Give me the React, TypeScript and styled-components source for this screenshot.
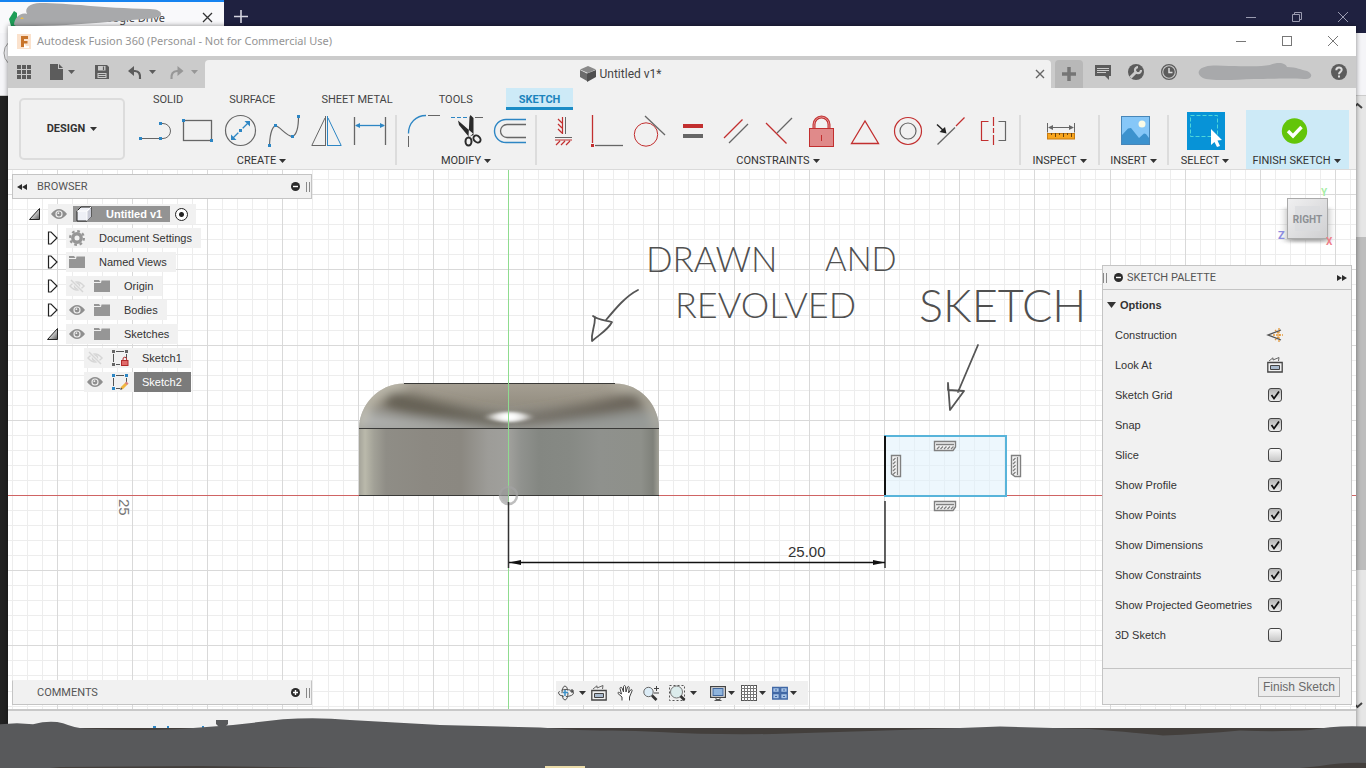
import React, { useState } from "react";
import styled, { createGlobalStyle } from "styled-components";

const UI = `"Liberation Sans", Arial, sans-serif`;
const CAPS = `Roboto, "Liberation Sans", sans-serif`;
const TITLE = `"Noto Sans", "Open Sans", sans-serif`;

const GREY = "#666666";
const BLUE = "#2d86c4";
const RED = "#c22f2f";
const PANEL = "#f1f1f1";

const Global = createGlobalStyle`
  * { box-sizing: border-box; }
  body { margin: 0; font-family: ${UI}; font-size: 11px; color: #333; }
  button { border: 0; background: none; padding: 0; margin: 0; font: inherit; color: inherit; }
  ul { list-style: none; margin: 0; padding: 0; }
  svg { display: block; flex: none; overflow: visible; }
`;

/* ---------- desktop ---------- */

const Desktop = styled.div`
  position: relative;
  display: flex;
  flex-direction: column;
  min-height: 100vh;
  overflow: hidden;
  background: #222;
`;

const BackWindow = styled.div`
  position: absolute;
  inset: 0;
  display: flex;
  flex-direction: column;
`;

const BackTabs = styled.div`
  display: flex;
  height: 33px;
  background: #1f2140;
`;

const BackTab = styled.div`
  position: relative;
  display: flex;
  align-items: center;
  justify-content: flex-end;
  width: 224px;
  padding-right: 12px;
  gap: 38px;
  background: #f9f9fb;
  border-top: 2px solid #1683f0;
  font: 11px/16px ${TITLE};
  color: #444;
`;

const BackControls = styled.div`
  display: flex;
  align-items: center;
  flex: 1;
  justify-content: space-between;
  padding: 0 18px 0 10px;
`;

const ControlSet = styled.div<{ $gap: number }>`
  display: flex;
  align-items: center;
  height: 12px;
  gap: ${(p) => p.$gap}px;
`;

const BackToolbar = styled.div`
  height: 63px;
  background: #f5f5f8;
  border-bottom: 1px solid #ccc;
`;

const BackPage = styled.div`
  display: flex;
  justify-content: flex-end;
  flex: 1;
  background: #222;
`;

const BackScroll = styled.div`
  display: flex;
  flex-direction: column;
  align-items: flex-end;
  justify-content: space-between;
  width: 16px;
  padding: 7px 4px 60px 0;
  background: linear-gradient(#e6e6e6 141px, #bdbdbd 141px 474px, #e6e6e6 474px);
`;

const Scribble = styled.svg`
  position: absolute;
  left: 0;
  top: -2px;
`;

const Window = styled.main`
  position: relative;
  display: flex;
  flex-direction: column;
  flex: 1;
  margin: 26px 10px 0 8px;
  background: ${PANEL};
  box-shadow: 0 0 5px rgba(0, 0, 0, 0.45);
`;

const TitleBar = styled.header`
  display: flex;
  align-items: center;
  height: 30px;
  padding: 0 18px 0 9px;
  gap: 6px;
  background: #fff;
  font: 11px/16px ${TITLE};
  color: #949494;
`;

const Grow = styled.div`
  flex: 1;
`;

/* ---------- document tab strip ---------- */

const TabStrip = styled.div`
  display: flex;
  height: 32px;
  padding-right: 9px;
  background: #cbcbcb;
`;

const QuickTools = styled.div`
  display: flex;
  align-items: center;
  width: 197px;
  padding-left: 9px;
`;

const IconButton = styled.button<{ $ml?: number }>`
  display: flex;
  align-items: center;
  margin-left: ${(p) => p.$ml ?? 0}px;
  gap: 5px;
`;

const DocTab = styled.div`
  display: flex;
  flex: 1;
  align-items: center;
  justify-content: center;
  gap: 4px;
  margin-top: 4px;
  padding: 0 7px 0 4px;
  border-radius: 4px 4px 0 0;
  background: ${PANEL};
  font: 12px/16px ${CAPS};
  color: #444;
`;

const NewTab = styled.button`
  display: flex;
  align-items: center;
  justify-content: center;
  width: 28px;
  margin: 4px 12px 0 4px;
  border-radius: 4px 4px 0 0;
  background: #b8b8b8;
`;

const StripRight = styled.div`
  display: flex;
  align-items: center;
  gap: 17px;
`;

/* ---------- ribbon ---------- */

const Ribbon = styled.div`
  display: flex;
  border-bottom: 1px solid #dadada;
  font: 11px/14px ${CAPS};
  color: #333;
`;

const DesignButton = styled.button`
  display: flex;
  align-items: center;
  justify-content: center;
  gap: 5px;
  width: 106px;
  height: 62px;
  margin: 10px 3px 0 11px;
  border: 2px solid #dcdcdc;
  border-radius: 5px;
  font-weight: 700;
`;

const RibbonMain = styled.div`
  flex: 1;
`;

const RibbonTabs = styled.nav`
  display: flex;
  gap: 20px;
  height: 22px;
  padding-left: 12px;
`;

const RibbonTab = styled.button<{ $active?: boolean }>`
  padding: 4px 13px 0;
  border-bottom: 3px solid ${(p) => (p.$active ? "#1b8cc6" : "transparent")};
  background: ${(p) => (p.$active ? "#cdeaf7" : "none")};
  color: ${(p) => (p.$active ? "#1b84bd" : "#444")};
  font-weight: ${(p) => (p.$active ? 700 : 400)};
`;

const Groups = styled.div`
  display: flex;
  padding-right: 7px;
`;

const GroupBox = styled.section<{ $width?: number; $hot?: boolean }>`
  position: relative;
  display: flex;
  flex-direction: column;
  align-items: center;
  width: ${(p) => (p.$width ? p.$width + "px" : "auto")};
  padding: ${(p) => (p.$width ? "2px 0 0" : "2px 11px 0 11px")};
  background: ${(p) => (p.$hot ? "#cdeaf7" : "none")};
  margin-left: ${(p) => (p.$hot ? "auto" : 0)};
`;

const Divider = styled.div`
  width: 2px;
  height: 50px;
  margin: 5px 0 0 -2px;
  background: #dcdcdc;
`;

const GroupIcons = styled.div`
  display: flex;
  align-items: center;
  height: 38px;
  gap: 11px;
`;

const GroupLabel = styled.button`
  display: flex;
  align-items: center;
  gap: 3px;
  height: 19px;
  padding: 2px 2px 0 0;
  white-space: nowrap;
`;

/* ---------- canvas ---------- */

const Canvas = styled.div`
  position: relative;
  flex: 1;
  min-height: 539px;
  overflow: hidden;
  background: #fff;
`;

const Drawing = styled.svg`
  position: absolute;
  inset: 0;
  width: 100%;
  height: 100%;
`;

const BrowserDock = styled.aside`
  position: absolute;
  left: 4px;
  top: 4px;
  width: 300px;
`;

const Bar = styled.div<{ $open?: boolean }>`
  display: flex;
  align-items: center;
  height: 25px;
  padding: 0 1px 0 ${(p) => (p.$open ? 24 : 4)}px;
  border: 1px solid #c4c4c4;
  ${(p) => p.$open && "border-top-color: #f1f1f1;"}
  background: ${PANEL};
  font: 11px/14px ${CAPS};
  color: #555;
`;

const BarText = styled.h2<{ $left?: number }>`
  flex: 1;
  margin: 0 0 0 ${(p) => p.$left ?? 0}px;
  font: inherit;
`;

const Grip = styled.span`
  width: 4px;
  height: 10px;
  margin-left: 6px;
  border: solid #888;
  border-width: 0 1px;
`;

const Tree = styled.ul`
  padding: 3px 0 0 18px;
`;

const TreeRow = styled.li<{ $level: number }>`
  display: flex;
  align-items: center;
  height: 24px;
  padding-left: ${(p) => p.$level * 18}px;
`;

const Twisty = styled.button`
  width: 18px;
  height: 20px;
  display: flex;
  align-items: center;
`;

const TreeBody = styled.div`
  display: flex;
  align-items: center;
  height: 20px;
  padding-left: 3px;
  background: ${PANEL};
`;

const TreeIcons = styled.div`
  display: flex;
  gap: 9px;
`;

const TreeLabel = styled.span<{ $selected?: boolean }>`
  margin-left: 6px;
  padding: 0 9px 0 8px;
  line-height: 20px;
  color: ${(p) => (p.$selected ? "#fff" : "#333")};
  background: ${(p) => (p.$selected ? "#7b7b7b" : "none")};
`;

const RootChip = styled.span`
  display: flex;
  align-items: center;
  gap: 14px;
  height: 16px;
  margin: 0 5px 0 6px;
  padding: 0 8px 0 3px;
  background: #939393;
  color: #fff;
  font-weight: 700;
`;

const RootRadio = styled.input`
  appearance: none;
  width: 13px;
  height: 13px;
  margin: 0 8px 0 0;
  border: 1px solid #222;
  border-radius: 50%;
  background: radial-gradient(circle, #222 0 2px, #fff 3px);
`;

const CommentsDock = styled.aside`
  position: absolute;
  left: 4px;
  bottom: 4px;
  width: 300px;
`;

const NavDock = styled.div`
  position: absolute;
  left: 0;
  right: 0;
  bottom: 4px;
  display: flex;
  justify-content: center;
  pointer-events: none;
`;

const NavBar = styled.div`
  display: flex;
  align-items: center;
  width: 252px;
  height: 24px;
  padding-left: 2px;
  background: #f0f0f0;
`;

const NavButton = styled.button<{ $gap: number }>`
  display: flex;
  align-items: center;
  gap: 2px;
  margin-right: ${(p) => p.$gap}px;
`;

const ViewCube = styled.div`
  position: absolute;
  right: 22px;
  top: 14px;
`;

const Palette = styled.aside`
  position: absolute;
  right: 4px;
  top: 95px;
  width: 250px;
  border: 1px solid #c4c4c4;
  background: ${PANEL};
`;

const PaletteHead = styled.div`
  display: flex;
  align-items: center;
  height: 24px;
  padding: 0 4px 0 0;
  border-bottom: 1px solid #c4c4c4;
  font: 11px/14px ${CAPS};
  color: #555;
`;

const HeadGrip = styled(Grip)`
  margin: 0 7px 0 0;
`;

const PaletteTitle = styled.h3`
  display: flex;
  align-items: center;
  gap: 4px;
  height: 30px;
  margin: 0;
  padding-left: 4px;
  font: 700 11px/14px ${UI};
`;

const Option = styled.div`
  display: flex;
  align-items: center;
  height: 30px;
  padding-left: 12px;
`;

const OptionLabel = styled.label`
  width: 152px;
`;

const CheckWrap = styled.span`
  display: grid;
  width: 16px;
  place-items: center;

  > * { grid-area: 1 / 1; }
  > svg { pointer-events: none; }
`;

const Check = styled.input`
  appearance: none;
  width: 14px;
  height: 14px;
  margin: 0;
  border: 1px solid #444;
  border-radius: 3px;
  background: linear-gradient(#fafafa, #c6c6c6);

  &:checked { background: linear-gradient(#b4b4b4, #ececec); }
`;

const PaletteFoot = styled.div`
  display: flex;
  justify-content: flex-end;
  margin-top: 18px;
  padding: 8px 11px 7px;
  border-top: 1px solid #c4c4c4;
`;

const FinishButton = styled.button`
  height: 20px;
  padding: 0 4px;
  border: 1px solid #b4b4b4;
  background: #ececec;
  color: #6a6a6a;
  font: 12px/16px ${UI};
`;

const StatusBar = styled.footer`
  height: 59px;
  border-top: 2px solid #c8c8c8;
  background: #f0f0f0;
`;

const Redaction = styled.svg`
  position: absolute;
  left: 0;
  bottom: 0;
  width: 100%;
  height: 56px;
`;

/* ---------- small drawings ---------- */

type IconProps = { w?: number; h?: number; children: React.ReactNode };
const Icon = ({ w = 16, h = 16, children }: IconProps) => (
  <svg width={w} height={h} viewBox={`0 0 ${w} ${h}`} fill="none" stroke={GREY} aria-hidden="true">
    {children}
  </svg>
);

const Caret = ({ color = "#333", w = 7, h = 4 }: { color?: string; w?: number; h?: number }) => (
  <Icon w={w} h={h}>
    <path d={`M0 0H${w}L${w / 2} ${h}Z`} fill={color} stroke="none" />
  </Icon>
);

const Dot = ({ x, y, c = BLUE }: { x: number; y: number; c?: string }) => (
  <rect x={x - 1.5} y={y - 1.5} width="3" height="3" fill={c} stroke="none" />
);

const Close = ({ s = 10, color = "#777", sw = 1 }: { s?: number; color?: string; sw?: number }) => (
  <Icon w={s} h={s}>
    <path d={`M0 0L${s} ${s}M${s} 0L0 ${s}`} stroke={color} strokeWidth={sw} />
  </Icon>
);

const Minus = ({ color }: { color: string }) => (
  <Icon w={10} h={10}><path d="M0 5.5H10" stroke={color} /></Icon>
);

const Eye = ({ off }: { off?: boolean }) => (
  <Icon>
    {off ? (
      <g stroke="#d6d6d6">
        <path d="M1 8Q8 0 15 8Q8 16 1 8Z" strokeWidth="1.5" />
        <circle cx="8" cy="8" r="2.5" strokeWidth="1.5" />
        <path d="M2 2L14 14" stroke="#f1f1f1" strokeWidth="3" />
        <path d="M2 2L14 14" strokeWidth="1.4" />
      </g>
    ) : (
      <g stroke="none">
        <path d="M0 8Q8 -2 16 8Q8 18 0 8Z" fill="#8f8f8f" />
        <circle cx="8" cy="8" r="3.6" fill="#eee" />
        <circle cx="8" cy="8" r="2.4" fill="#8f8f8f" />
        <circle cx="7.4" cy="7.2" r="0.9" fill="#eee" />
      </g>
    )}
  </Icon>
);

const Folder = () => (
  <Icon>
    <path d="M0 2H5L6.500 4H0ZM7.500 2.500H16V14H0V5H7Z" fill="#969696" stroke="none" />
  </Icon>
);

const Gear = () => (
  <Icon>
    <circle cx="8" cy="8" r="4.200" stroke="#969696" strokeWidth="3.400" />
    <circle cx="8" cy="8" r="6.900" stroke="#969696" strokeWidth="2.200" strokeDasharray="2.710 2.710" />
  </Icon>
);

const SketchIcon = ({ locked }: { locked?: boolean }) => {
  const c = locked ? "#666" : BLUE;
  return (
    <Icon>
      <path d="M1.500 4V12M4 1.500H12M14.500 4V8M4 14.500H8" stroke="#555" />
      <Dot x={1.5} y={1.5} c={c} /><Dot x={14.5} y={1.5} c={c} /><Dot x={1.5} y={14.5} c={c} />
      {locked ? (
        <g stroke="#b02a2a">
          <path d="M11 10.500V9a1.800 1.800 0 0 1 3.600 0V10.500" />
          <rect x="9.500" y="10.500" width="6.500" height="5" fill="#e06a6a" />
        </g>
      ) : (
        <g>
          <path d="M9.500 14.500L14.500 9.500" stroke="#f0b640" strokeWidth="3" />
          <path d="M14 10L15.500 8.500" stroke="#d98080" strokeWidth="3" />
          <path d="M8.500 15.500L9.800 14.200" stroke="#444" strokeWidth="1.500" />
        </g>
      )}
    </Icon>
  );
};

const Twist = ({ open }: { open: boolean }) => (
  <Icon w={12} h={14}>
    {open ? (
      <path d="M-.500 12.500H9.500V1.500Z" fill="url(#twist)" stroke="#222" />
    ) : (
      <path d="M.500 1V13H3L9 7L3 1Z" fill="#fff" stroke="#222" strokeWidth="1.200" />
    )}
  </Icon>
);

const Badge = ({ plus }: { plus?: boolean }) => (
  <Icon w={9} h={9}>
    <circle cx="4.500" cy="4.500" r="4.500" fill="#2b2b2b" stroke="none" />
    <path d={plus ? "M2 4.500H7M4.500 2V7" : "M2 4.500H7"} stroke="#fff" strokeWidth="1.400" />
  </Icon>
);

const LookAt = () => (
  <Icon>
    <path d="M.800 5.500H15.200V15H.800Z" stroke="#444" strokeWidth="1.300" />
    <path d="M3.500 8.500H12.500V12.500H3.500Z" fill="#a9bacd" stroke="#444" />
    <path d="M2 4L6 .800V3L12 .500L11.500 4" stroke="#666" />
  </Icon>
);

/* ---------- ribbon icons, each on a 32px tile ---------- */

const Tile = ({ children }: { children: React.ReactNode }) => <Icon w={32} h={32}>{children}</Icon>;

const createIcons: Record<string, React.ReactNode> = {
  Line: (<><path d="M1.500 23.500H21.500M21.500 8.500H24a7.500 7.500 0 0 1 0 15H21.500" /><Dot x={1.5} y={23.5} /><Dot x={21.5} y={23.5} /><Dot x={21.5} y={8.5} /></>),
  Rectangle: (<><rect x="1.500" y="5.500" width="28" height="20" strokeWidth="1.300" /><Dot x={1.5} y={5.5} /><Dot x={29.5} y={25.5} /></>),
  Circle: (<><circle cx="15.500" cy="15.500" r="15" strokeWidth="1.200" /><path d="M7.500 23.500L23.500 7.500" stroke={BLUE} strokeWidth="1.300" /><path d="M6 25V19.500L11.500 25ZM25 6V11.500L19.500 6Z" fill={BLUE} stroke="none" /><circle cx="15.500" cy="15.500" r="3" fill="#f1f1f1" stroke="none" /><Dot x={15.5} y={15.5} /></>),
  Spline: (<><path d="M1.500 30C2 17 5 10 8.500 11S19 21.500 24.500 21.500C30 19 30.500 8 30.500 1.500" strokeWidth="1.200" /><Dot x={1.5} y={30.5} /><Dot x={7.5} y={10.5} /><Dot x={24.5} y={21.5} /><Dot x={30.5} y={1.5} /></>),
  Mirror: (<><path d="M14.500 1V31M14 3L.800 30.500H14" /><path d="M16.500 1V31M17 3L30.200 30.500H17" stroke={BLUE} /></>),
  Dimension: (<><path d="M.500 2V30M31.500 2V30" strokeWidth="1.300" /><path d="M2 10.500H30" stroke={BLUE} strokeWidth="1.300" /><path d="M1 10.500L6 8V13ZM31 10.500L26 8V13Z" fill={BLUE} stroke="none" /></>),
};

const modifyIcons: Record<string, React.ReactNode> = {
  Fillet: (<><path d="M.500 18.500C.500 8 8 .500 18 .500" stroke={BLUE} strokeWidth="1.300" /><path d="M20 .500H32M.500 21V32" /></>),
  Trim: (<><path d="M0 2.500H17" stroke={BLUE} strokeDasharray="4 2" /><path d="M24 2.500H32" /><path d="M7 5.500L8 10L18 22L22 18.500ZM19.500 0L22.500 3V20L17.500 22L18.500 2Z" fill="#2b2b2b" stroke="none" /><ellipse cx="17.500" cy="26.500" rx="3" ry="4" stroke="#2b2b2b" strokeWidth="2" /><ellipse cx="26" cy="24" rx="4" ry="3" stroke="#2b2b2b" strokeWidth="2" transform="rotate(45 26 24)" /><circle cx="19.700" cy="19.500" r="1" fill="#eee" stroke="none" /></>),
  Offset: (<><path d="M32 4.500H12a11.500 11.500 0 0 0 0 23H32" stroke={BLUE} strokeWidth="1.400" /><path d="M32 9.500H13a6.500 6.500 0 0 0 0 13H32" strokeWidth="1.300" /></>),
};

const constraintIcons: Record<string, React.ReactNode> = {
  "Horizontal/Vertical": (<><path d="M17.500 2V19M7 22.500H24" /><path d="M14.500 2V19M7 25H24M14 8L10 4M14 13L10 9M14 18L10 14M8 30L12 26M13 30L17 26M18 30L22 26" stroke={RED} strokeWidth="1.200" /></>),
  Coincident: (<><path d="M1.500 0V28" stroke={RED} strokeWidth="1.300" /><path d="M4 30.500H32" strokeWidth="1.300" /><Dot x={1.5} y={30.5} c={RED} /></>),
  Tangent: (<><circle cx="12" cy="19.500" r="11.700" stroke={RED} /><path d="M11 1L31 20" strokeWidth="1.300" /></>),
  Equal: (<><path d="M6 11H26" stroke={RED} strokeWidth="4" /><path d="M6 21H26" strokeWidth="4" /></>),
  Parallel: (<><path d="M4 23L22.500 4.500" stroke={RED} strokeWidth="1.300" /><path d="M9 28L28 9" strokeWidth="1.300" /></>),
  Perpendicular: (<><path d="M3 8L23.500 28.500" stroke={RED} strokeWidth="1.300" /><path d="M14 18L29 3" strokeWidth="1.300" /></>),
  Fix: (<><path d="M8 13.500V9.500a7.500 7.500 0 0 1 15 0V13.500" stroke={RED} strokeWidth="3" /><path d="M8 13.500V9.500a7.500 7.500 0 0 1 15 0V13.500" stroke="#e49494" /><rect x="3.500" y="13.500" width="24" height="18" fill="#e08a8a" stroke={RED} /><path d="M15.500 20V26" stroke={RED} /></>),
  Polygon: (<path d="M2.500 28.500H29.500L16 6Z" stroke={RED} strokeWidth="1.300" />),
  Concentric: (<><circle cx="16" cy="16" r="13.500" stroke={RED} strokeWidth="1.200" /><circle cx="16" cy="16" r="8" strokeWidth="1.200" /></>),
  Midpoint: (<><path d="M2.500 29.500L20 12.500" strokeWidth="1.300" /><path d="M21 11L29.500 2.500" stroke={RED} strokeWidth="1.300" /><path d="M2 9.500L9 16" stroke="#222" strokeWidth="1.500" /><path d="M11.500 18.500L4.500 17L10 12Z" fill="#222" stroke="none" /></>),
  Symmetry: (<><path d="M10.500 6.500H3.500V25.500H10.500M15.500 2V11M15.500 13V18M15.500 20V30" stroke={RED} strokeWidth="1.200" /><path d="M20.500 6.500H27.500V25.500H20.500" strokeWidth="1.200" /></>),
};

const inspectIcon = (
  <><path d="M2.500 8V17.500M29.500 8V17.500M4 12.500H28" /><path d="M3 12.500L8 10V15ZM29 12.500L24 10V15Z" fill={GREY} stroke="none" /><rect x="2.500" y="18.500" width="27" height="5.500" fill="#f9a61e" stroke="#c77c12" /><path d="M6.500 18V20M10.500 18V22M14.500 18V20M18.500 18V22M22.500 18V20M26.500 18V22" stroke="#6b4410" /></>
);
const insertIcon = (
  <><rect x="2.500" y="1.500" width="28" height="28" fill="#86c7f8" stroke="#4786b8" /><path d="M3 20L9 13.500L12 13L20 23L25 18.500L27 19L30 23V29H3Z" fill="#3c92ce" stroke="none" /><circle cx="23" cy="9" r="3.500" fill="#fbfbe6" stroke="none" /></>
);
const selectIcon = (
  <Icon w={38} h={38}>
    <rect width="38" height="38" fill="#0793d7" stroke="none" />
    <rect x="3.500" y="3.500" width="27" height="21" stroke="#4fd6d9" strokeDasharray="4 2" />
    <path d="M24 17L35 28L30.500 28.500L33 34L30 35L27.500 30L24 33Z" fill="#fff" stroke="none" />
  </Icon>
);
const finishIcon = (
  <Icon w={32} h={26}>
    <circle cx="12.500" cy="13" r="12.700" fill="#63c509" stroke="none" />
    <path d="M6 13L11 18L19.500 9" stroke="#fff" strokeWidth="3.400" />
  </Icon>
);

const Group = ({ label, icons, children, width, hot, rule }: {
  label: string; icons?: Record<string, React.ReactNode>; children?: React.ReactNode;
  width?: number; hot?: boolean; rule?: boolean;
}) => (
  <>
    <GroupBox $width={width} $hot={hot}>
      <GroupIcons>
        {icons
          ? Object.entries(icons).map(([name, art]) => (
              <IconButton key={name} aria-label={name}><Tile>{art}</Tile></IconButton>
            ))
          : <IconButton aria-label={label}>{children}</IconButton>}
      </GroupIcons>
      <GroupLabel>{label}<Caret /></GroupLabel>
    </GroupBox>
    {rule && <Divider />}
  </>
);

/* ---------- model view ---------- */

const OX = 500.5;
const OY = 325.5;
const STEP = 15.04;

const GridLines = () => {
  const minor: string[] = [];
  const major: string[] = [];
  for (let i = -34; i < 180; i++) {
    if (i === 0) continue;
    const x = Math.round(OX + i * STEP - 0.5) + 0.5;
    (i % 5 ? minor : major).push(`M${x} 0V2000`);
  }
  for (let i = -22; i < 110; i++) {
    if (i === 0) continue;
    const y = Math.round(OY + i * STEP - 0.5) + 0.5;
    (i % 5 ? minor : major).push(`M0 ${y}H4000`);
  }
  return (
    <g fill="none">
      <path d={minor.join("")} stroke="#ededed" />
      <path d={major.join("")} stroke="#d9d9d9" />
    </g>
  );
};

const HGlyph = ({ x, y }: { x: number; y: number }) => (
  <g transform={`translate(${x} ${y})`} stroke="#808080">
    <path d="M.500 .500H21.500V6L19 9.500H.500Z" fill="#f4f4f4" strokeWidth="1.400" />
    <path d="M2 3.500H20M3 8L5.500 5.500M6.500 8L9 5.500M10 8L12.500 5.500M13.500 8L16 5.500M17 8L19.500 5.500" strokeWidth="1.300" />
  </g>
);

const VGlyph = ({ x, y }: { x: number; y: number }) => (
  <g transform={`translate(${x} ${y})`} stroke="#808080">
    <path d="M.500 .500H9.500V21.500H4L.500 19Z" fill="#f4f4f4" strokeWidth="1.400" />
    <path d="M6.500 2V20M2 5.500L4.500 3M2 9L4.500 6.500M2 12.500L4.500 10M2 16L4.500 13.500M2 19.500L4.500 17" strokeWidth="1.300" />
  </g>
);

const Model = () => (
  <Drawing role="img" aria-label="Model view">
    <defs>
      <linearGradient id="side" gradientUnits="userSpaceOnUse" x1="351" x2="651" y1="0" y2="0">
        <stop offset="0" stopColor="#a5a49a" /><stop offset=".02" stopColor="#bab9ab" />
        <stop offset=".05" stopColor="#a2a197" /><stop offset=".09" stopColor="#8f8d86" />
        <stop offset=".22" stopColor="#8c8982" /><stop offset=".34" stopColor="#8b8881" />
        <stop offset=".43" stopColor="#9d9c98" /><stop offset=".5" stopColor="#a0a09c" />
        <stop offset=".54" stopColor="#90928e" /><stop offset=".6" stopColor="#848782" />
        <stop offset=".7" stopColor="#868984" /><stop offset=".8" stopColor="#8f918d" />
        <stop offset=".94" stopColor="#8e908a" /><stop offset=".98" stopColor="#7f817a" />
        <stop offset="1" stopColor="#a3a298" />
      </linearGradient>
      <linearGradient id="dome" x1="0" x2="0" y1="0" y2="1">
        <stop offset="0" stopColor="#a59f93" /><stop offset=".4" stopColor="#979184" />
        <stop offset=".75" stopColor="#8f8e88" /><stop offset="1" stopColor="#9b9c98" />
      </linearGradient>
      <linearGradient id="twist" x1="0" x2="1" y1="0" y2="1">
        <stop offset=".3" stopColor="#fff" /><stop offset="1" stopColor="#555" />
      </linearGradient>
      <filter id="soft" x="-30%" y="-80%" width="160%" height="260%"><feGaussianBlur stdDeviation="6" /></filter>
      <filter id="glow" x="-50%" y="-100%" width="200%" height="300%"><feGaussianBlur stdDeviation="4 1.800" /></filter>
      <clipPath id="domeClip"><path d="M351 258.500C351 236 370 213.500 396 213.500H607C633 213.500 651 236 651 258.500Z" /></clipPath>
    </defs>
    <GridLines />
    <rect x="0" y="325" width="100%" height="1" fill="#cf6464" />

    <rect x="351" y="258" width="300" height="67" fill="url(#side)" />
    <g clipPath="url(#domeClip)">
      <rect x="351" y="213" width="300" height="46" fill="url(#dome)" />
      <g filter="url(#soft)">
        <path d="M382 222C420 227 450 240 500 247L500 256C450 251 410 248 374 237Z" fill="#645e52" />
        <path d="M632 222C600 230 560 240 505 247L505 254C560 248 600 245 638 237Z" fill="#666156" />
        <path d="M356 242C400 252 440 254 480 258H356Z" fill="#b4b5b3" />
        <path d="M651 242C620 246 570 250 540 258H651Z" fill="#979b99" />
        <path d="M351 258C352 236 368 215 396 213" stroke="#d2d0c2" strokeWidth="7" fill="none" />
        <path d="M651 258C650 236 634 215 607 213" stroke="#c0bdb0" strokeWidth="6" fill="none" />
      </g>
      <ellipse cx="501" cy="247" rx="20" ry="5" fill="#fff" opacity=".7" filter="url(#glow)" />
      <ellipse cx="501" cy="247" rx="11" ry="4" fill="#fff" filter="url(#glow)" />
    </g>
    <path d="M396 213.500H607M351 258.500H651M351 325.500H651" stroke="#3a3a38" />
    <path d={`M${OX} 0V2000`} stroke="#8fdc8f" />
    <circle cx={OX} cy={OY} r="8.500" stroke="#a2a2a2" strokeOpacity=".7" strokeWidth="2.500" fill="none" />
    <path d="M500.500 318a7.500 7.500 0 0 0 0 15Z" fill="#9a9a9a" fillOpacity=".7" />

    <rect x="877" y="266" width="121" height="60" fill="#dff0fb" fillOpacity=".55" stroke="#58b4da" strokeWidth="2" />
    <path d="M877 266V325" stroke="#111" strokeWidth="2" />
    <HGlyph x={926} y={271} />
    <HGlyph x={926} y={331} />
    <VGlyph x={883} y={285} />
    <VGlyph x={1003} y={285} />

    <path d="M500.500 332V398M877 331V398" stroke="#333" strokeWidth="1.500" />
    <path d="M501 392.500H877" stroke="#111" strokeWidth="1.300" />
    <path d="M501 392.500L513 390V395ZM877 392.500L865 390V395Z" fill="#111" />
    <text x="780" y="387" fontFamily="Liberation Sans" fontSize="15" fill="#333">25.00</text>
    <text x="0" y="0" transform="translate(111 329) rotate(90)" fontFamily="Liberation Sans" fontSize="15" fill="#777">25</text>

    <g fontFamily="Lato, sans-serif" fontWeight="300" fill="#505050">
      <text x="638" y="102" fontSize="35">DRAWN</text>
      <text x="817" y="101" fontSize="33">AND</text>
      <text x="667" y="148" fontSize="36">REVOLVED</text>
      <text x="911" y="152" fontSize="45">SKETCH</text>
    </g>
    <g stroke="#555" strokeWidth="1.800" fill="none" strokeLinecap="round" strokeLinejoin="round">
      <path d="M630 120C618 126 608 138 598 150M585 146C590 150 597 150 604 152C600 160 592 164 584 171C583 162 587 158 587 147" />
      <path d="M970 175L950 222M940 213V220L956 221L942 240L940 213" />
    </g>
  </Drawing>
);

/* ---------- data ---------- */

type Node = { label: string; level: number; open?: boolean; leaf?: boolean; selected?: boolean; icons: React.ReactNode };
const nodes: Node[] = [
  { label: "Document Settings", level: 1, open: false, icons: <Gear /> },
  { label: "Named Views", level: 1, open: false, icons: <Folder /> },
  { label: "Origin", level: 1, open: false, icons: <><Eye off /><Folder /></> },
  { label: "Bodies", level: 1, open: false, icons: <><Eye /><Folder /></> },
  { label: "Sketches", level: 1, open: true, icons: <><Eye /><Folder /></> },
  { label: "Sketch1", level: 2, leaf: true, icons: <><Eye off /><SketchIcon locked /></> },
  { label: "Sketch2", level: 2, leaf: true, selected: true, icons: <><Eye /><SketchIcon /></> },
];

const initialOptions: [string, boolean][] = [
  ["Sketch Grid", true], ["Snap", true], ["Slice", false], ["Show Profile", true], ["Show Points", true],
  ["Show Dimensions", true], ["Show Constraints", true], ["Show Projected Geometries", true], ["3D Sketch", false],
];

export default function App() {
  const [options, setOptions] = useState(initialOptions);
  const toggle = (i: number) =>
    setOptions(options.map(([n, v], j) => [n, j === i ? !v : v] as [string, boolean]));

  return (
    <Desktop>
      <Global />
      <BackWindow>
        <BackTabs>
          <BackTab>
            <span>Google Drive</span>
            <IconButton aria-label="Close tab"><Close s={9} color="#333" sw={1.3} /></IconButton>
            <Scribble width="165" height="26">
              <path d="M9 19L14 11L17 13V26H11Z" fill="#1f9d58" />
              <path d="M14 24C15 18 20 12 27 14C24 8 30 3 40 3C70 3 100 8 150 9C158 9 162 12 161 15C160 19 140 19 120 21C95 23 60 26 35 26C22 27 14 27 14 24Z" fill="#a8a9ab" />
              <path d="M20 19L22 17L24 19Z" fill="#e8bd4a" />
            </Scribble>
          </BackTab>
          <BackControls>
            <IconButton aria-label="New tab">
              <Icon w={14} h={14}><path d="M0 6.500H14M7 0V13" stroke="#d5d5e0" strokeWidth="1.600" /></Icon>
            </IconButton>
            <ControlSet $gap={36}>
              <Minus color="#9a9bb0" />
              <Icon w={10} h={10}><path d="M.500 2.500H7.500V9.500H.500ZM2.500 2.500V.500H9.500V7.500H7.500" stroke="#9a9bb0" /></Icon>
              <Close color="#9a9bb0" />
            </ControlSet>
          </BackControls>
        </BackTabs>
        <BackToolbar>
          <Icon w={16} h={40}><circle cx="18" cy="20" r="14" stroke="#999" /></Icon>
        </BackToolbar>
        <BackPage>
          <BackScroll>
            <Icon w={9} h={5}><path d="M0 5L4.500 1L9 5" stroke="#444" strokeWidth="2" /></Icon>
            <Icon w={9} h={5}><path d="M0 0L4.500 4L9 0" stroke="#444" strokeWidth="2" /></Icon>
          </BackScroll>
        </BackPage>
      </BackWindow>

      <Window>
        <TitleBar>
          <Icon w={14} h={15}>
            <rect width="14" height="15" fill="#fbe2cd" stroke="none" />
            <path d="M4 2H11V5H7V7H10.500V9.500H7V13H4Z" fill="#c8742a" stroke="none" />
            <path d="M7 13V9.500L9 12H12V14H7Z" fill="#fff" stroke="none" />
          </Icon>
          <span>Autodesk Fusion 360 (Personal - Not for Commercial Use)</span>
          <Grow />
          <ControlSet $gap={36}>
            <Minus color="#777" />
            <Icon w={10} h={10}><rect x=".500" y=".500" width="9" height="9" stroke="#777" /></Icon>
            <Close />
          </ControlSet>
        </TitleBar>

        <TabStrip>
          <QuickTools>
            <IconButton aria-label="Data panel">
              <Icon w={14} h={14}>
                <path d="M0 2H4M5 2H9M10 2H14M0 7H4M5 7H9M10 7H14M0 12H4M5 12H9M10 12H14" stroke="#5c5c5c" strokeWidth="4" />
              </Icon>
            </IconButton>
            <IconButton $ml={19} aria-label="File">
              <Icon w={13} h={16}><path d="M0 0H8V5H13V16H0ZM9 0L13 4H9Z" fill="#5c5c5c" stroke="none" /></Icon>
              <Caret color="#5c5c5c" />
            </IconButton>
            <IconButton $ml={20} aria-label="Save">
              <Icon w={14} h={14}>
                <path d="M0 0H12L14 2V14H0Z" fill="#5c5c5c" stroke="none" />
                <path d="M3 1H10.500V5.500H3ZM2.500 8H11.500V13H2.500Z" fill="#cbcbcb" stroke="none" />
                <path d="M8.500 1.500V5M3.500 9.500H10.500M3.500 11.500H10.500" stroke="#5c5c5c" strokeWidth="1.200" />
              </Icon>
            </IconButton>
            <IconButton $ml={19} aria-label="Undo">
              <Icon w={16} h={13}><path d="M1.500 5H7C11 5 12.500 8 12 13" stroke="#5c5c5c" strokeWidth="2.200" /><path d="M0 5L6 0V10Z" fill="#5c5c5c" stroke="none" /></Icon>
              <Caret color="#5c5c5c" />
            </IconButton>
            <IconButton $ml={14} aria-label="Redo">
              <Icon w={16} h={13}><path d="M12 5H7C3 5 1 8 1.500 13" stroke="#979797" strokeWidth="2.200" /><path d="M13.500 5L7.500 0V10Z" fill="#979797" stroke="none" /></Icon>
              <Caret color="#979797" />
            </IconButton>
          </QuickTools>
          <DocTab>
            <Grow />
            <Icon>
              <path d="M0 3.500L8 0L16 3.500L8 7Z" fill="#8a8a8a" stroke="none" />
              <path d="M0 4V11L7 15V7.500Z" fill="#6c6c6c" stroke="none" />
              <path d="M16 4V11L7 16V7.500Z" fill="#4f4f4f" stroke="none" />
            </Icon>
            <span>Untitled v1*</span>
            <Grow />
            <IconButton aria-label="Close document"><Close s={8} color="#666" sw={1.4} /></IconButton>
          </DocTab>
          <NewTab aria-label="New document">
            <Icon w={14} h={14}><path d="M0 7H14M7 0V14" stroke="#757575" strokeWidth="3.500" /></Icon>
          </NewTab>
          <StripRight>
            <Icon>
              <path d="M0 1H16V12H14V16L10 12H0Z" fill="#5c5c5c" stroke="none" />
              <path d="M2 4.500H14M2 6.500H14M2 8.500H11" stroke="#cbcbcb" />
            </Icon>
            <Icon>
              <circle cx="8" cy="8" r="8" fill="#5c5c5c" stroke="none" />
              <path d="M2.500 13.500L8.500 7.500" stroke="#cbcbcb" strokeWidth="3" />
              <path d="M13 6A3 3 0 1 1 10 3.200" stroke="#cbcbcb" strokeWidth="2.200" />
            </Icon>
            <Icon>
              <circle cx="8" cy="8" r="7.400" stroke="#5c5c5c" strokeWidth="1.200" />
              <circle cx="8" cy="8" r="5.700" fill="#5c5c5c" stroke="none" />
              <path d="M8 4V8.500H11.500" stroke="#ddd" strokeWidth="1.500" />
            </Icon>
            <Icon w={120} h={18}>
              <path d="M5 8C8 2 20 2 35 3C50 3 66 4 76 2C86 -2 92 1 93 4C103 4 107 7 113 8C120 11 118 17 110 16C95 15 80 16 60 16C40 17 15 18 9 15C5 13 4 10 5 8Z" fill="#a8a9ab" stroke="none" />
            </Icon>
            <Icon>
              <circle cx="8" cy="8" r="8" fill="#5c5c5c" stroke="none" />
              <path d="M5.300 6.200C5.300 2.500 10.900 2.700 10.700 6C10.500 8 8 7.800 8 10.200M8 11.500V13.500" stroke="#ddd" strokeWidth="2" />
            </Icon>
          </StripRight>
        </TabStrip>

        <Ribbon>
          <DesignButton>DESIGN<Caret /></DesignButton>
          <RibbonMain>
            <RibbonTabs>
              <RibbonTab>SOLID</RibbonTab>
              <RibbonTab>SURFACE</RibbonTab>
              <RibbonTab>SHEET METAL</RibbonTab>
              <RibbonTab>TOOLS</RibbonTab>
              <RibbonTab $active>SKETCH</RibbonTab>
            </RibbonTabs>
            <Groups>
              <Group label="CREATE" icons={createIcons} rule />
              <Group label="MODIFY" icons={modifyIcons} rule />
              <Group label="CONSTRAINTS" icons={constraintIcons} rule />
              <Group label="INSPECT" width={79} rule><Tile>{inspectIcon}</Tile></Group>
              <Group label="INSERT" width={69} rule><Tile>{insertIcon}</Tile></Group>
              <Group label="SELECT" width={74}>{selectIcon}</Group>
              <Group label="FINISH SKETCH" width={103} hot>{finishIcon}</Group>
            </Groups>
          </RibbonMain>
        </Ribbon>

        <Canvas>
          <Model />

          <BrowserDock>
            <Bar>
              <Icon w={10} h={6}><path d="M5 0V6L0 3ZM10 0V6L5 3Z" fill="#2b2b2b" stroke="none" /></Icon>
              <BarText $left={10}>BROWSER</BarText>
              <Badge />
              <Grip />
            </Bar>
            <Tree>
              <TreeRow $level={0}>
                <Twisty aria-label="Collapse Untitled v1"><Twist open /></Twisty>
                <TreeBody>
                  <Eye />
                  <RootChip>
                    <Icon>
                      <path d="M1 5L5 1H15V11L11 15H1Z" fill="#eef0f6" stroke="#222" />
                      <path d="M1 5H11V15M11 5L15 1" stroke="#fff" />
                      <path d="M11.500 5.500L15 2V11L11.500 14.500Z" fill="#c9cbd6" stroke="none" />
                    </Icon>
                    Untitled v1
                  </RootChip>
                  <RootRadio type="radio" aria-label="Activate component" defaultChecked />
                </TreeBody>
              </TreeRow>
              {nodes.map((n) => (
                <TreeRow key={n.label} $level={n.level}>
                  <Twisty as={n.leaf ? "span" : "button"} aria-label={n.leaf ? undefined : "Toggle " + n.label}>
                    {!n.leaf && <Twist open={!!n.open} />}
                  </Twisty>
                  <TreeBody>
                    <TreeIcons>{n.icons}</TreeIcons>
                    <TreeLabel $selected={n.selected}>{n.label}</TreeLabel>
                  </TreeBody>
                </TreeRow>
              ))}
            </Tree>
          </BrowserDock>

          <ViewCube>
            <svg width="56" height="62" aria-label="View cube">
              <defs>
                <linearGradient id="cube" x1="0" x2="1" y1="0" y2="1">
                  <stop offset="0" stopColor="#f0f0f1" /><stop offset="1" stopColor="#cfcfd1" />
                </linearGradient>
              </defs>
              <rect x="9" y="24" width="41" height="34" fill="#777" opacity=".6" filter="url(#glow)" />
              <rect x="9.500" y="14.500" width="40" height="40" fill="url(#cube)" stroke="#aaa" />
              <rect x="17" y="22" width="25" height="25" fill="#d8dade" opacity=".6" />
              <g fontFamily="Roboto" fontWeight="700">
                <text x="29.500" y="39" fontSize="10" textAnchor="middle" fill="#8d9094">RIGHT</text>
                <text x="43" y="12" fontSize="10" fill="#a5eea5">Y</text>
                <text x="0" y="55" fontSize="11" fill="#8c8ce0">Z</text>
                <text x="48" y="61" fontSize="10" fill="#ee7f88">X</text>
              </g>
            </svg>
          </ViewCube>

          <Palette>
            <PaletteHead>
              <HeadGrip />
              <Badge />
              <BarText $left={4}>SKETCH PALETTE</BarText>
              <Icon w={10} h={6}><path d="M0 0V6L5 3ZM5 0V6L10 3Z" fill="#2b2b2b" stroke="none" /></Icon>
            </PaletteHead>
            <PaletteTitle><Caret w={9} h={6} />Options</PaletteTitle>
            <Option>
              <OptionLabel as="span">Construction</OptionLabel>
              <IconButton aria-label="Construction">
                <Icon>
                  <path d="M8 3L14 9M8 13L14 7M12 1V15M6 8H16" stroke="#e59a3c" strokeWidth="1.300" strokeDasharray="2 1" />
                  <path d="M14 3L1 8L14 13" stroke="#555" strokeWidth="1.300" />
                </Icon>
              </IconButton>
            </Option>
            <Option>
              <OptionLabel as="span">Look At</OptionLabel>
              <IconButton aria-label="Look At"><LookAt /></IconButton>
            </Option>
            {options.map(([name, on], i) => (
              <Option key={name}>
                <OptionLabel htmlFor={"opt" + i}>{name}</OptionLabel>
                <CheckWrap>
                  <Check id={"opt" + i} type="checkbox" checked={on} onChange={() => toggle(i)} />
                  {on && <Icon w={10} h={10}><path d="M1.500 5L4 8.500L9 1.500" stroke="#111" strokeWidth="1.700" /></Icon>}
                </CheckWrap>
              </Option>
            ))}
            <PaletteFoot><FinishButton>Finish Sketch</FinishButton></PaletteFoot>
          </Palette>

          <CommentsDock>
            <Bar $open>
              <BarText>COMMENTS</BarText>
              <Badge plus />
              <Grip />
            </Bar>
          </CommentsDock>

          <NavDock>
            <NavBar>
              <NavButton $gap={5} aria-label="Orbit">
                <Icon w={19}>
                  <ellipse cx="8" cy="8" rx="7.500" ry="3.500" stroke="#555" strokeDasharray="9 2" />
                  <ellipse cx="7" cy="8" rx="3" ry="7" stroke="#555" strokeDasharray="14 2" />
                  <path d="M7 5V11M5 7.500H10" stroke="#3a8fc7" strokeWidth="1.500" />
                  <path d="M12 6H16M14 4V8" stroke="#333" />
                </Icon>
                <Caret />
              </NavButton>
              <NavButton $gap={10} aria-label="Look At"><LookAt /></NavButton>
              <NavButton $gap={10} aria-label="Pan">
                <Icon><path d="M5 15.500V12L1 8.500C.500 7 2 7 3 8L4.500 9L3 3.500C3 2 4.500 2 5 3L6.500 7L6.500 1.500C7 .200 8.200 .400 8.500 1.500L9 7L10.500 2C11.200 1 12.200 1.500 12.200 2.500L11.500 8L13.500 5C14.500 4 15.500 4.800 15 6L12.500 12V15.500" fill="#fff" stroke="#444" /></Icon>
              </NavButton>
              <NavButton $gap={10} aria-label="Zoom">
                <Icon>
                  <circle cx="5.500" cy="7" r="4.700" fill="#dcecf6" stroke="#666" /><path d="M9 10.500L13.500 15" stroke="#333" strokeWidth="2.600" />
                  <path d="M11 3.500H16M13.500 1V6M11 8H16" stroke="#444" />
                </Icon>
              </NavButton>
              <NavButton $gap={13} aria-label="Fit">
                <Icon w={19}>
                  <rect x=".500" y=".500" width="15" height="15" stroke="#555" strokeDasharray="2 2" />
                  <circle cx="7.500" cy="7" r="6" fill="#dcecec" stroke="#777" /><path d="M11.500 11L15.500 15" stroke="#333" strokeWidth="2.600" />
                </Icon>
                <Caret />
              </NavButton>
              <NavButton $gap={6} aria-label="Display settings">
                <Icon>
                  <rect x=".600" y="1.600" width="14.800" height="10.800" fill="#e8e8e8" stroke="#444" strokeWidth="1.200" />
                  <rect x="3" y="3.500" width="10" height="7" fill="#8fb4dd" stroke="#41679c" /><path d="M6 12.500V14.500H10V12.500M4.500 15.500H11.500" stroke="#555" />
                </Icon>
                <Caret />
              </NavButton>
              <NavButton $gap={6} aria-label="Grid and snaps">
                <Icon>
                  <rect x=".500" y=".500" width="15" height="15" fill="#fff" stroke="#555" />
                  <path d="M3.500 0V16M6.500 0V16M9.500 0V16M12.500 0V16M0 3.500H16M0 6.500H16M0 9.500H16M0 12.500H16" stroke="#777" />
                </Icon>
                <Caret />
              </NavButton>
              <NavButton $gap={0} aria-label="Viewports">
                <Icon>
                  <path d="M.700 2.500H7.300V7.500H.700ZM8.700 2.500H15.300V7.500H8.700ZM.700 8.700H7.300V14H.700ZM8.700 8.700H15.300V14H8.700Z" fill="#a7c3e6" stroke="#3f67a5" strokeWidth="1.300" />
                  <path d="M3 5H5M11 5H13M3 11.500H5M11 11.500H13" stroke="#3f67a5" />
                </Icon>
                <Caret />
              </NavButton>
            </NavBar>
          </NavDock>
        </Canvas>
        <StatusBar />
      </Window>

      <Redaction viewBox="0 0 1366 56" preserveAspectRatio="none" aria-hidden="true">
        <path d="M153 14H156V17H153ZM167 14H169V17H167ZM202 14H204V17H202Z" fill={BLUE} />
        <path d="M216 8H228V12L224 16H220L216 12Z" fill="#58595b" />
        <path d="M77 16H1366V56H0V30H77Z" fill="#433f3c" />
        <path d="M0 12.300L17 11.300L33 12.300Q50 8 63 11.300Q75 16 85 16.500Q130 19 180 17L233 13L283 7.300Q317 5 350 8L440 13L540 15.500Q570 18 600 18.500Q630 18 660 20Q710 23 773 22L870 19L960 16L1000 14.500L1090 17Q1140 21 1163 23.500Q1200 22 1240 18.500Q1280 20 1310 18Q1335 13 1366 14.500V51Q1345 50 1320 54L1300 56H340L200 54L60 55L50 56H0Z" fill="#58595b" />
        <path d="M545 54H585V56H545Z" fill="#eadba8" />
      </Redaction>
    </Desktop>
  );
}
